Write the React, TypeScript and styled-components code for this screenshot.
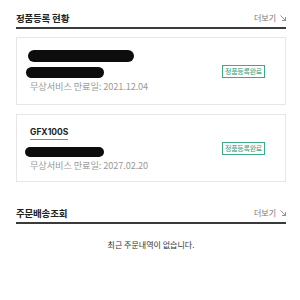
import React from "react";
import styled, { createGlobalStyle } from "styled-components";

const Global = createGlobalStyle`
  html, body { margin: 0; padding: 0; background: #fff; }
  body { font-family: "Noto Sans CJK KR", "Noto Sans", sans-serif; color: #222; }
`;

const Page = styled.div`
  width: 300px;
  box-sizing: border-box;
  padding: 0 14px 0 16px;
`;

const Section = styled.section<{ $top: number }>`
  margin-top: ${(p) => p.$top}px;
`;

const Header = styled.div`
  display: flex;
  align-items: center;
  justify-content: space-between;
  height: 19px;
  border-bottom: 2px solid #3a3a3a;
`;

const Title = styled.h2`
  margin: 0;
  font-size: 9.5px;
  font-weight: 700;
  color: #222;
  letter-spacing: -0.2px;
`;

const More = styled.a`
  display: flex;
  align-items: center;
  gap: 4px;
  font-size: 8px;
  color: #777;
  text-decoration: none;
  margin-right: 0;
`;

const CardList = styled.div`
  display: flex;
  flex-direction: column;
  gap: 9px;
  margin-top: 8px;
`;

const Card = styled.div`
  display: flex;
  align-items: center;
  justify-content: space-between;
  height: 68px;
  box-sizing: border-box;
  border: 1px solid #e6e6e6;
  padding: 0 20px 0 8px;
`;

const Info = styled.div`
  display: flex;
  flex-direction: column;
  align-items: flex-start;
`;

const Redact = styled.span<{ $w: number; $h: number; $ml: number; $mt: number }>`
  display: block;
  width: ${(p) => p.$w}px;
  height: ${(p) => p.$h}px;
  margin-left: ${(p) => p.$ml}px;
  margin-top: ${(p) => p.$mt}px;
  background: #0d0d0d;
  border-radius: 7px;
`;

const Model = styled.span`
  margin-left: 5px;
  margin-top: 2px;
  font-family: "Inter", "Liberation Sans", sans-serif;
  font-size: 8.5px;
  font-weight: 700;
  color: #222;
  line-height: 10px;
  padding-bottom: 2px;
  border-bottom: 1px solid #888;
`;

const DateText = styled.span`
  margin-left: 5px;
  margin-top: 2px;
  font-size: 9.2px;
  line-height: 12px;
  color: #9a9a9a;
  letter-spacing: -0.1px;
`;

const Badge = styled.span`
  display: inline-flex;
  align-items: center;
  justify-content: center;
  width: 43px;
  height: 13px;
  box-sizing: border-box;
  border: 1px solid #3daa86;
  font-size: 7px;
  color: #2f9c78;
  letter-spacing: -0.3px;
`;

const Empty = styled.p`
  margin: 15px 0 0;
  text-align: center;
  font-size: 8px;
  line-height: 12px;
  color: #333;
`;

const Arrow = () => (
  <svg width="6" height="6" viewBox="0 0 6 6" fill="none" stroke="#777" strokeWidth="0.8">
    <path d="M0.5 0.5 L5.5 5.5 M5.5 2 L5.5 5.5 L2 5.5" />
  </svg>
);

export default function App() {
  return (
    <Page>
      <Global />
      <Section $top={8}>
        <Header>
          <Title>정품등록 현황</Title>
          <More>
            더보기 <Arrow />
          </More>
        </Header>
        <CardList>
          <Card>
            <Info>
              <Redact $w={106} $h={12} $ml={3} $mt={0} />
              <Redact $w={78} $h={11} $ml={1} $mt={5} />
              <DateText>무상서비스 만료일: 2021.12.04</DateText>
            </Info>
            <Badge>정품등록완료</Badge>
          </Card>
          <Card>
            <Info>
              <Model>GFX100S</Model>
              <Redact $w={79} $h={10} $ml={0} $mt={7} />
              <DateText>무상서비스 만료일: 2027.02.20</DateText>
            </Info>
            <Badge>정품등록완료</Badge>
          </Card>
        </CardList>
      </Section>
      <Section $top={21}>
        <Header>
          <Title>주문배송조회</Title>
          <More>
            더보기 <Arrow />
          </More>
        </Header>
        <Empty>최근 주문내역이 없습니다.</Empty>
      </Section>
    </Page>
  );
}
